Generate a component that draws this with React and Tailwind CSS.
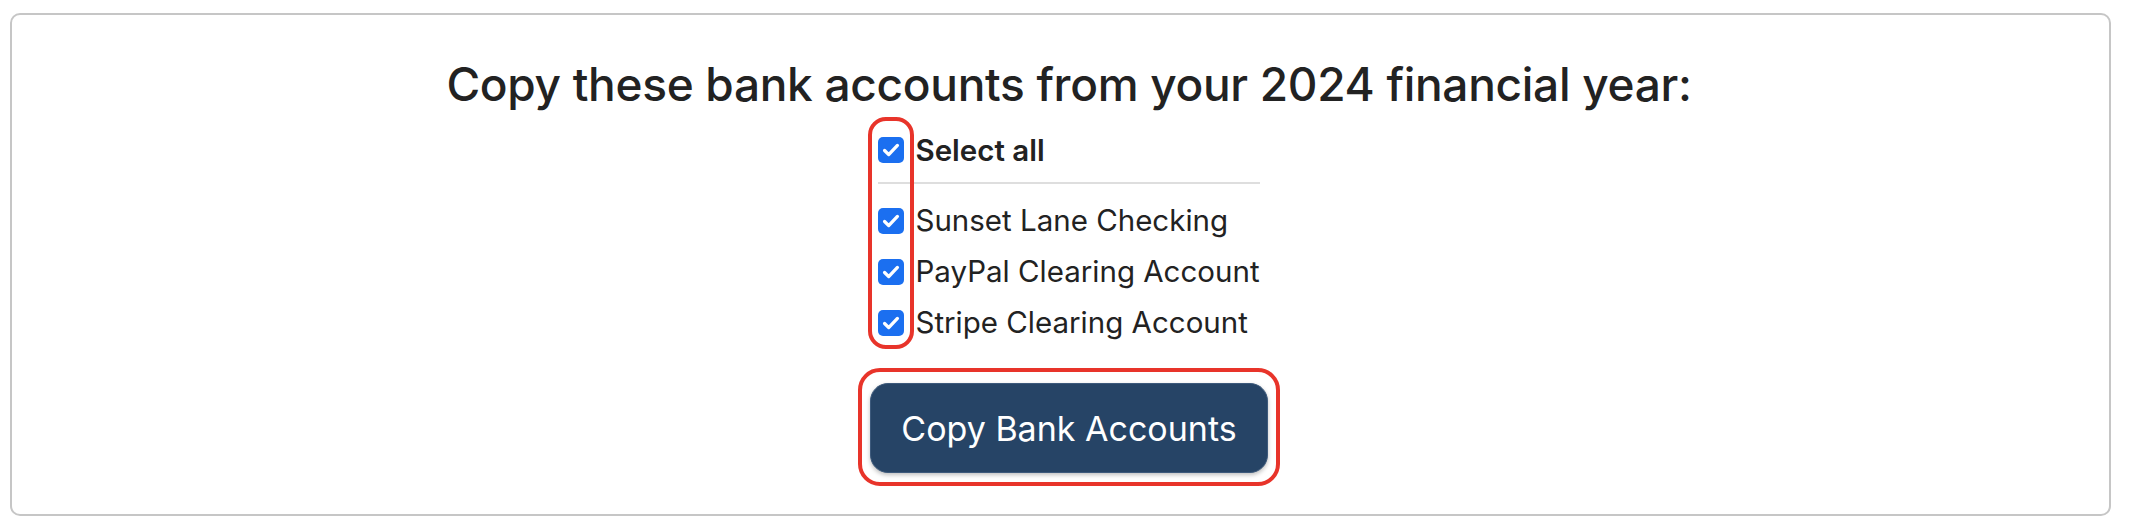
import React, { useState } from 'react';

const ACCOUNTS = ['Sunset Lane Checking', 'PayPal Clearing Account', 'Stripe Clearing Account'];

function Box({ checked, onChange }) {
  return (
    <button
      type="button"
      onClick={onChange}
      className={`flex h-[26px] w-[26px] shrink-0 items-center justify-center rounded-[5px] ${
        checked ? 'bg-[#1b6ff0]' : 'border-2 border-[#767676] bg-white'
      }`}
    >
      {checked && (
        <svg viewBox="0 0 24 24" className="h-[22px] w-[22px]" fill="none" stroke="white" strokeWidth="3.6" strokeLinecap="round" strokeLinejoin="round">
          <path d="M5 12.5l4.5 4.5L19 7" />
        </svg>
      )}
    </button>
  );
}

export default function App() {
  const [picked, setPicked] = useState(ACCOUNTS.map(() => true));
  const allOn = picked.every(Boolean);

  const toggle = (i) => setPicked(picked.map((p, j) => (j === i ? !p : p)));
  const toggleAll = () => setPicked(picked.map(() => !allOn));

  return (
    <div className="min-h-[526px] bg-white pt-[13px] pl-[10px] pr-[27px] font-['Inter',sans-serif] text-[#222]">
      <div className="flex h-[503px] flex-col items-center rounded-[10px] border-2 border-[#c6c6c6] pt-[42px] pl-[17px]">
        <h1 className="text-[46px] font-medium leading-[54px] tracking-[-0.3px]">
          Copy these bank accounts from your 2024 financial year:
        </h1>

        <div className="relative mt-[13px] w-fit">
          <div className="pointer-events-none absolute left-[-10px] top-[-7px] h-[232px] w-[46px] rounded-[18px] border-4 border-[#e8342a]" />

          <label className="flex h-[52px] items-center gap-[11px]">
            <Box checked={allOn} onChange={toggleAll} />
            <span className="text-[29.5px] font-semibold">Select all</span>
          </label>
          <div className="mt-[6px] h-[2px] w-full bg-[#dedede]" />

          <div className="mt-[11px]">
            {ACCOUNTS.map((name, i) => (
              <label key={name} className="flex h-[51px] items-center gap-[11px]">
                <Box checked={picked[i]} onChange={() => toggle(i)} />
                <span className="text-[29.5px]">{name}</span>
              </label>
            ))}
          </div>
        </div>

        <div className="mt-[20px] rounded-[22px] border-4 border-[#e8342a] px-[8px] pt-[11px] pb-[9px]">
          <button
            type="button"
            className="h-[90px] w-[398px] rounded-[18px] border border-[#3d5a7c] bg-[#264466] text-[34px] text-white shadow-[0_2px_4px_rgba(0,0,0,0.25)]"
          >
            Copy Bank Accounts
          </button>
        </div>
      </div>
    </div>
  );
}
